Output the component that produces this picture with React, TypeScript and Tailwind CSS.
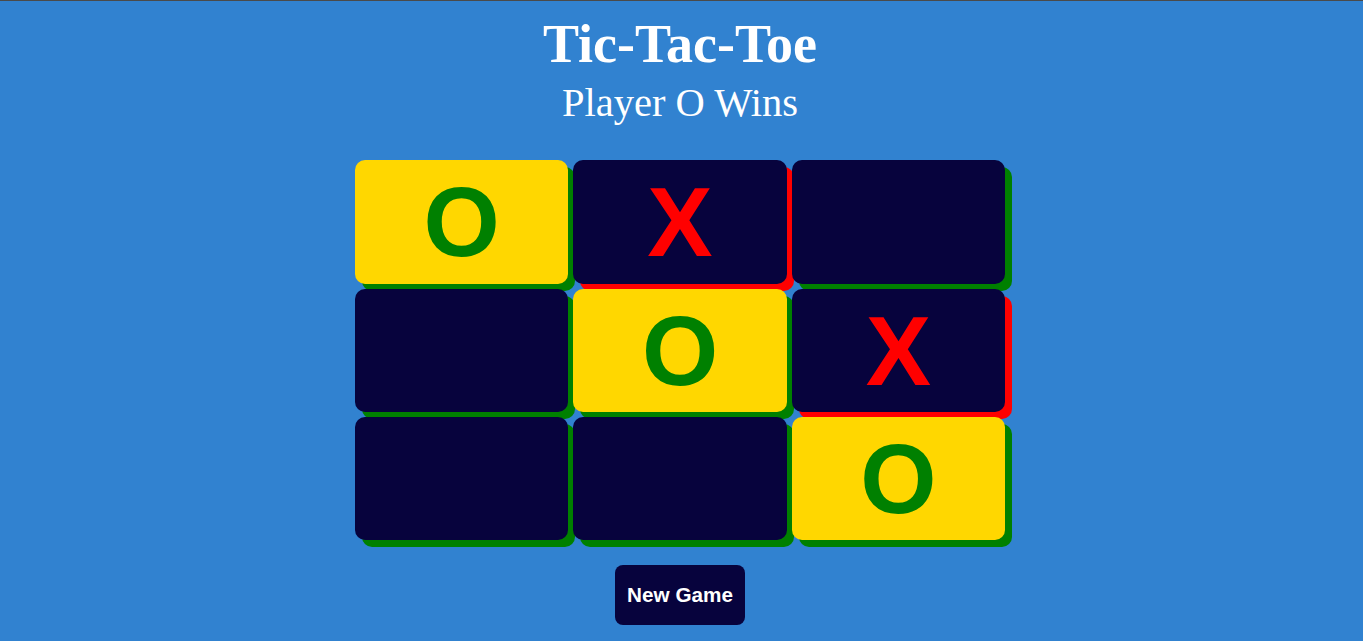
import React from "react";

type Mark = "X" | "O" | "";

const board: Mark[] = ["O", "X", "", "", "O", "X", "", "", "O"];
const winLine = [0, 4, 8];

function Cell({ value, win }: { value: Mark; win: boolean }) {
    const shadow = value === "X" ? "shadow-[7px_7px_0_0_#ff0000]" : "shadow-[7px_7px_0_0_#008000]";
    return (
        <div
            className={`flex items-center justify-center rounded-[10px] ${shadow} ${
                win ? "bg-[#ffd700]" : "bg-[#07033d]"
            }`}
        >
            <span
                className={`text-[98px] leading-none font-bold font-['Liberation_Sans',Arial,sans-serif] ${
                    value === "X" ? "text-[#ff0000]" : "text-[#008000]"
                }`}
            >
                {value}
            </span>
        </div>
    );
}

export default function App() {
    return (
        <div className="min-h-[641px] bg-[#3182d0]">
            <div className="h-px bg-[#4a4a4a]" />
            <div className="w-[1360px] flex flex-col items-center">
                <h1 className="mt-[16px] text-[54px] leading-[54px] font-bold text-white font-['Liberation_Serif','Times_New_Roman',serif]">
                    Tic-Tac-Toe
                </h1>
                <p className="mt-[12px] text-[40.5px] leading-[40px] text-white font-['Liberation_Serif','Times_New_Roman',serif]">
                    Player O Wins
                </p>

                {/* Board */}
                <div className="mt-[37px] grid w-[650px] grid-cols-3 grid-rows-[124px_123px_123px] gap-[5px]">
                    {board.map((value, i) => (
                        <Cell key={i} value={value} win={winLine.includes(i)} />
                    ))}
                </div>

                <button className="mt-[25px] h-[60px] w-[130px] rounded-lg bg-[#07033d] text-[20.7px] font-bold text-white font-['Liberation_Sans',Arial,sans-serif]">
                    New Game
                </button>
            </div>
        </div>
    );
}
